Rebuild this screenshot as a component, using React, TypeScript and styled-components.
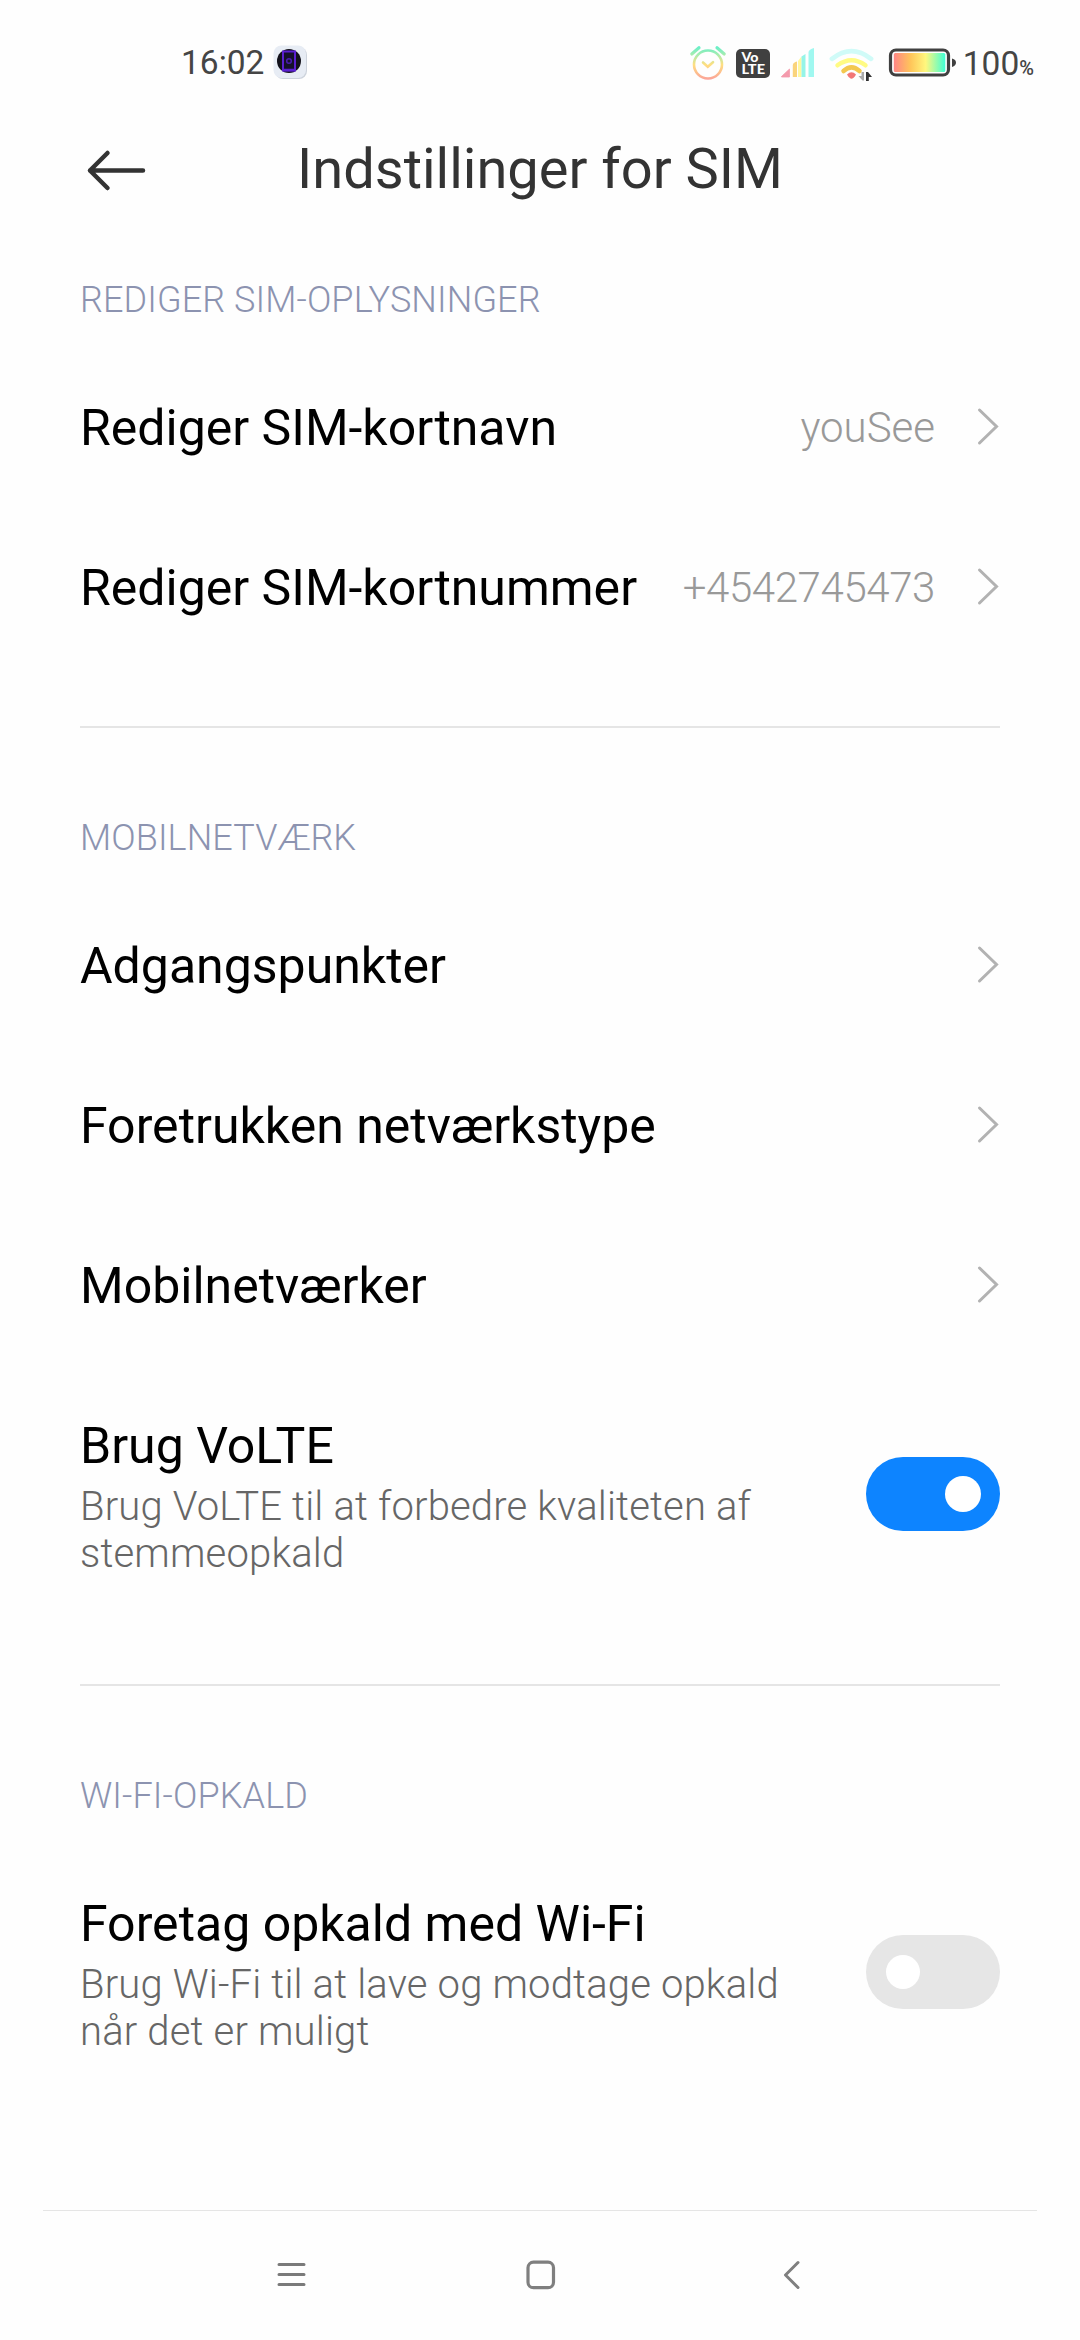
import React from "react";
import styled, { createGlobalStyle } from "styled-components";

const GlobalStyle = createGlobalStyle`
  * { box-sizing: border-box; }
  body { margin: 0; background: #fefefe; }
`;

const Screen = styled.div`
  width: 1080px;
  height: 2340px;
  display: flex;
  flex-direction: column;
  background: #fefefe;
  font-family: Roboto, "Noto Sans", sans-serif;
  overflow: hidden;
`;

const StatusBar = styled.header`
  height: 110px;
  padding: 16px 46px 0 181px;
  display: flex;
  align-items: center;
  justify-content: space-between;
  color: #454545;
`;

const StatusGroup = styled.div`
  display: flex;
  align-items: center;
`;

const Clock = styled.span`
  width: 92px;
  font-size: 33.5px;
  line-height: 40px;
`;

const Percent = styled.span`
  margin-left: 5px;
  padding-top: 1px;
  display: flex;
  align-items: baseline;
  font-size: 33.5px;
  line-height: 40px;
  white-space: nowrap;
`;

const PercentSign = styled.span`
  font-size: 20px;
  line-height: 24px;
  font-weight: 500;
`;

const StatusIcons = styled.svg`
  display: block;
  width: 270px;
  height: 40px;
`;

const TitleBar = styled.div`
  height: 118px;
  padding: 0 80px;
  display: grid;
  grid-template-columns: 80px 1fr 80px;
  align-items: center;
`;

const BackButton = styled.button`
  display: flex;
  width: 72px;
  height: 60px;
  padding: 0;
  border: 0;
  background: none;
`;

const Title = styled.h1`
  margin: 0;
  text-align: center;
  font-size: 56px;
  line-height: 66px;
  font-weight: 400;
  color: #333;
  white-space: nowrap;
`;

const Section = styled.section<{ $first?: boolean }>`
  margin: 0 80px;
  padding: ${(p) => (p.$first ? 51 : 89)}px 0 58px;
  border-top: ${(p) => (p.$first ? "0" : "2px solid #e5e5e5")};
`;

const SectionLabel = styled.h2`
  margin: 0 0 27px;
  font-size: 36px;
  line-height: 42px;
  font-weight: 300;
  letter-spacing: 0.1px;
  color: #8c93b0;
`;

const Row = styled.div`
  height: 160px;
  display: flex;
  align-items: center;
`;

const SummaryRow = styled.div`
  height: 260px;
  padding-top: 51px;
  display: flex;
  align-items: flex-start;
  justify-content: space-between;
`;

const RowTitle = styled.div`
  flex: 1;
  font-size: 50px;
  line-height: 58px;
  color: #000;
  white-space: nowrap;
`;

const RowValue = styled.div<{ $numeric: boolean }>`
  margin-right: 43px;
  font-size: 42px;
  line-height: 50px;
  font-weight: 300;
  letter-spacing: ${(p) => (p.$numeric ? "-0.4px" : "0")};
  color: #999;
`;

const RowText = styled.div`
  width: 740px;
`;

const Summary = styled.p`
  margin: 8px 0 0;
  font-size: 40px;
  line-height: 47px;
  font-weight: 300;
  letter-spacing: 0.17px;
  color: #666;
`;

const Switch = styled.div<{ $on: boolean }>`
  width: 134px;
  height: 74px;
  margin-top: 40px;
  padding: 0 ${(p) => (p.$on ? 19 : 20)}px;
  border-radius: 37px;
  display: flex;
  align-items: center;
  justify-content: ${(p) => (p.$on ? "flex-end" : "flex-start")};
  background: ${(p) => (p.$on ? "#0d84ff" : "#e6e6e6")};
`;

const Thumb = styled.div<{ $on: boolean }>`
  width: ${(p) => (p.$on ? 36 : 34)}px;
  height: ${(p) => (p.$on ? 36 : 34)}px;
  border-radius: 50%;
  background: #fff;
`;

const NavBar = styled.nav`
  height: 130px;
  margin: auto 43px 0;
  padding: 0 221px 2px;
  border-top: 1px solid #e5e5e5;
  display: flex;
  align-items: center;
  justify-content: space-between;
`;

const Icon = styled.svg`
  display: block;
  flex: none;
  overflow: visible;
`;

function Chevron() {
  return (
    <Icon width="22" height="40" viewBox="0 0 22 40" fill="none">
      <path d="M1.5 2L18.5 18.5L1.5 35" stroke="#b2b2b2" strokeWidth="3" strokeLinecap="round" />
    </Icon>
  );
}

function AppBadge() {
  return (
    <Icon width="36" height="36" viewBox="0 0 36 36">
      <rect x="2" y="2" width="32" height="32" rx="8" fill="#cdd3dc" />
      <rect x="0.5" y="0.5" width="32.5" height="32.5" rx="8" fill="#e7ecf4" />
      <circle cx="16" cy="16" r="12" fill="#12111a" />
      <rect x="10" y="6.500" width="12" height="19" fill="#15102a" stroke="#5a1fd0" strokeWidth="2" />
      <path d="M10 25h12" stroke="#5a1fd0" strokeWidth="2.500" />
      <circle cx="16" cy="16" r="2.300" fill="none" stroke="#4a1cb0" strokeWidth="1.500" />
    </Icon>
  );
}

/* Alarm, VoLTE, signal, Wi-Fi and battery share one 270x40 strip. */
function StatusStrip() {
  return (
    <StatusIcons viewBox="688 42 270 40" fill="none">
      <defs>
        <linearGradient id="alarm" gradientUnits="userSpaceOnUse" x1="0" y1="45" x2="0" y2="79">
          <stop offset="0" stopColor="#5ff0cc" />
          <stop offset="0.25" stopColor="#a5ecb0" />
          <stop offset="0.55" stopColor="#ffdf80" />
          <stop offset="1" stopColor="#fba09a" />
        </linearGradient>
        <linearGradient id="battery" x1="0" x2="1" y1="0" y2="0">
          <stop offset="0" stopColor="#ff8585" />
          <stop offset="0.33" stopColor="#ffc65a" />
          <stop offset="0.62" stopColor="#fff77e" />
          <stop offset="1" stopColor="#3fffd5" />
        </linearGradient>
      </defs>

      <g stroke="url(#alarm)" strokeLinecap="round">
        <circle cx="708" cy="63.500" r="14" strokeWidth="2.600" />
        <path d="M691.800 53L699 46.800M724.200 53L717 46.800" strokeWidth="3.200" />
        <path d="M703 61.500L707.800 65.700L713 61.200" strokeWidth="2.600" />
      </g>

      <rect x="736" y="48" width="34" height="29" rx="5" fill="#404040" />
      <g fill="#fff" fontFamily="Lato, Roboto, sans-serif" fontWeight="900">
        <text x="741.500" y="61" fontSize="13.500" textLength="17" lengthAdjust="spacingAndGlyphs">Vo</text>
        <text x="741.500" y="73.300" fontSize="13.500" textLength="23.500" lengthAdjust="spacingAndGlyphs">LTE</text>
      </g>

      <path d="M781.500 75.500L789.500 68V76H781.500Z" fill="#f49aac" stroke="#f49aac" strokeWidth="0.800" />
      <path d="M792.800 64Q793 61.500 797 60.500V76H792.800Z" fill="#fad47b" />
      <path d="M798 60V76H801.500V55.500Z" fill="#fff7a0" />
      <path d="M801.500 55.500L805.500 53V76H801.500Z" fill="#95f5e8" />
      <path d="M808.500 51Q809 48.500 814 47V76H808.500Z" fill="#a0f8f0" />

      <path d="M832 57.800Q851.500 42.500 871 57.800" stroke="#d0fbf8" strokeWidth="4.800" strokeLinecap="round" />
      <path d="M837.500 64.300Q851.500 54.200 865.500 64.300" stroke="#fffb84" strokeWidth="4.500" strokeLinecap="round" />
      <path d="M843.500 70Q851.500 62.800 859.500 70" stroke="#f3c84f" strokeWidth="4.500" strokeLinecap="round" />
      <path d="M847 73.500Q851.500 68.800 856 73.500Q853.500 78 851 77.800Q848.500 77 847 73.500Z" fill="#f27777" />
      <path d="M864 71V79.500H862.500L858.500 75H861.500V71Z" fill="#aaaaaa" />
      <path d="M866 80V71H868L872 76H868.800V80Z" fill="#333333" />

      <rect x="890.500" y="49" width="58" height="25" rx="5.500" stroke="#404040" strokeWidth="3.200" />
      <rect x="893.800" y="52" width="51.500" height="19" rx="1.500" fill="url(#battery)" />
      <path d="M952 57.500Q956 58.500 956 61.500Q956 64.500 952 66Z" fill="#404040" />
    </StatusIcons>
  );
}

interface LinkRowProps {
  title: string;
  value?: string;
  numeric?: boolean;
}

function LinkRow({ title, value, numeric = false }: LinkRowProps) {
  return (
    <Row>
      <RowTitle>{title}</RowTitle>
      {value && <RowValue $numeric={numeric}>{value}</RowValue>}
      <Chevron />
    </Row>
  );
}

interface SwitchRowProps {
  title: string;
  summary: string;
  on: boolean;
}

function SwitchRow({ title, summary, on }: SwitchRowProps) {
  return (
    <SummaryRow>
      <RowText>
        <RowTitle>{title}</RowTitle>
        <Summary>{summary}</Summary>
      </RowText>
      <Switch $on={on} role="switch" aria-checked={on}>
        <Thumb $on={on} />
      </Switch>
    </SummaryRow>
  );
}

export default function App() {
  return (
    <Screen>
      <GlobalStyle />
      <StatusBar>
        <StatusGroup>
          <Clock>16:02</Clock>
          <AppBadge />
        </StatusGroup>
        <StatusGroup>
          <StatusStrip />
          <Percent>
            100<PercentSign>%</PercentSign>
          </Percent>
        </StatusGroup>
      </StatusBar>

      <TitleBar>
        <BackButton>
          <Icon width="72" height="60" viewBox="80 139 72 60" fill="none">
            <path
              d="M107.500 153L90 170.500L107.500 188M90 170.500H143"
              stroke="#333"
              strokeWidth="4.500"
              strokeLinecap="round"
              strokeLinejoin="round"
            />
          </Icon>
        </BackButton>
        <Title>Indstillinger for SIM</Title>
      </TitleBar>

      <Section $first>
        <SectionLabel>REDIGER SIM-OPLYSNINGER</SectionLabel>
        <LinkRow title="Rediger SIM-kortnavn" value="youSee" />
        <LinkRow title="Rediger SIM-kortnummer" value="+4542745473" numeric />
      </Section>

      <Section>
        <SectionLabel>MOBILNETVÆRK</SectionLabel>
        <LinkRow title="Adgangspunkter" />
        <LinkRow title="Foretrukken netværkstype" />
        <LinkRow title="Mobilnetværker" />
        <SwitchRow title="Brug VoLTE" summary="Brug VoLTE til at forbedre kvaliteten af stemmeopkald" on />
      </Section>

      <Section>
        <SectionLabel>WI-FI-OPKALD</SectionLabel>
        <SwitchRow
          title="Foretag opkald med Wi-Fi"
          summary="Brug Wi-Fi til at lave og modtage opkald når det er muligt"
          on={false}
        />
      </Section>

      <NavBar>
        <Icon width="56" height="40" viewBox="264 2255 56 40" fill="none">
          <path d="M279 2264.500H304M279 2274.500H304M279 2284.500H304" stroke="#7a7a7a" strokeWidth="3" strokeLinecap="round" />
        </Icon>
        <Icon width="56" height="40" viewBox="512 2255 56 40" fill="none">
          <rect x="528" y="2262.200" width="25.500" height="25.500" rx="5.500" stroke="#7f7f7f" strokeWidth="3.200" />
        </Icon>
        <Icon width="56" height="40" viewBox="760 2255 56 40" fill="none">
          <path d="M798 2262.500L785.500 2275L798 2287.500" stroke="#7f7f7f" strokeWidth="3" strokeLinecap="round" strokeLinejoin="round" />
        </Icon>
      </NavBar>
    </Screen>
  );
}
